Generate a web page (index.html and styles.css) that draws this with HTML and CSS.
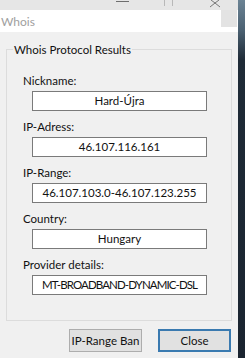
FILE: index.html
```html
<!DOCTYPE html>
<html lang="en">
  <head>
    <meta charset="UTF-8" />
    <meta name="viewport" content="width=device-width, initial-scale=1.0" />
    <title>Whois</title>
    <link rel="stylesheet" href="styles.css">
  </head>
  <body>
    <div class="screen">
      <div class="window">
        <!-- parent window caption, only its bottom edge is visible -->
        <div class="parent-caption">
          <svg class="caption-icons" width="238" height="10" viewBox="0 0 238 10">
            <line x1="116" y1="1.5" x2="129" y2="1.5" stroke="#6e6e6e" stroke-width="1" />
            <line x1="164.5" y1="0" x2="164.5" y2="6" stroke="#b8b8b8" stroke-width="1" />
            <line x1="172.5" y1="0" x2="172.5" y2="6" stroke="#b8b8b8" stroke-width="1" />
            <line x1="211" y1="0" x2="215" y2="3" stroke="#777" stroke-width="1" />
            <line x1="219" y1="0" x2="215" y2="3" stroke="#777" stroke-width="1" />
            <line x1="215" y1="3" x2="210" y2="7" stroke="#777" stroke-width="1" />
            <line x1="215" y1="3" x2="220" y2="7" stroke="#777" stroke-width="1" />
          </svg>
        </div>

        <div class="titlebar">
          <span class="title">Whois</span>
          <span class="close-box"></span>
        </div>

        <div class="dialog">
          <fieldset class="group">
            <legend>Whois Protocol Results</legend>

            <label>Nickname:</label>
            <div class="field">Hard-Újra</div>

            <label>IP-Adress:</label>
            <div class="field">46.107.116.161</div>

            <label>IP-Range:</label>
            <div class="field">46.107.103.0-46.107.123.255</div>

            <label>Country:</label>
            <div class="field">Hungary</div>

            <label>Provider details:</label>
            <div class="field last caps">MT-BROADBAND-DYNAMIC-DSL</div>
          </fieldset>

          <div class="buttons">
            <button>IP-Range Ban</button>
            <button class="default">Close</button>
          </div>
        </div>
      </div>
      <div class="desktop"></div>
    </div>
  </body>
</html>
```

FILE: styles.css
```css
body {
  margin: 0;
  font-family: Lato, "Noto Sans", sans-serif;
  font-size: 11.5px;
  color: #111;
  background: #1d2935;
}
.screen {
  display: flex;
  height: 358px;
  overflow: hidden;
}
.window {
  width: 238px;
  display: flex;
  flex-direction: column;
  background: #f0f0f0;
}
.desktop {
  flex: 1;
  background: linear-gradient(#6b8394 0, #4b6172 30px, #1f2b37 60px, #1a2430 100%);
}
.parent-caption {
  height: 10px;
  background: #e6e6e6;
}
.caption-icons {
  display: block;
}
.titlebar {
  height: 22px;
  background: #fff;
  display: flex;
  align-items: flex-start;
  justify-content: space-between;
}
.title {
  color: #a0a0a0;
  font-size: 12px;
  line-height: 15px;
  margin: 4px 0 0 1px;
}
.close-box {
  width: 16px;
  height: 17px;
  margin-right: 1px;
  background: #e3e3e3;
}
.dialog {
  flex: 1;
  padding: 10px 6px 0 6px;
}
.group {
  margin: 0;
  border: 1px solid #dcdcdc;
  padding: 16px 24px 25px 16px;
}
.group legend {
  padding: 0 1px;
  margin-left: -10px;
  line-height: 15px;
  color: #111;
}
.group label {
  display: block;
  line-height: 15px;
  margin-bottom: 3px;
}
.field {
  height: 18px;
  line-height: 18px;
  margin: 0 0 8px 9px;
  border: 1px solid #7a7a7a;
  background: #fff;
  text-align: center;
  white-space: nowrap;
}
.field.last {
  margin-bottom: 0;
}
.field.caps {
  letter-spacing: -0.9px;
}
.buttons {
  display: flex;
  justify-content: flex-end;
  gap: 16px;
  margin: 8px 1px 0 0;
}
button {
  width: 73px;
  height: 23px;
  padding: 0;
  font: inherit;
  color: #111;
  background: #e1e1e1;
  border: 1px solid #adadad;
  border-radius: 0;
}
button.default {
  border: 2px solid #3a7ab0;
}
```
